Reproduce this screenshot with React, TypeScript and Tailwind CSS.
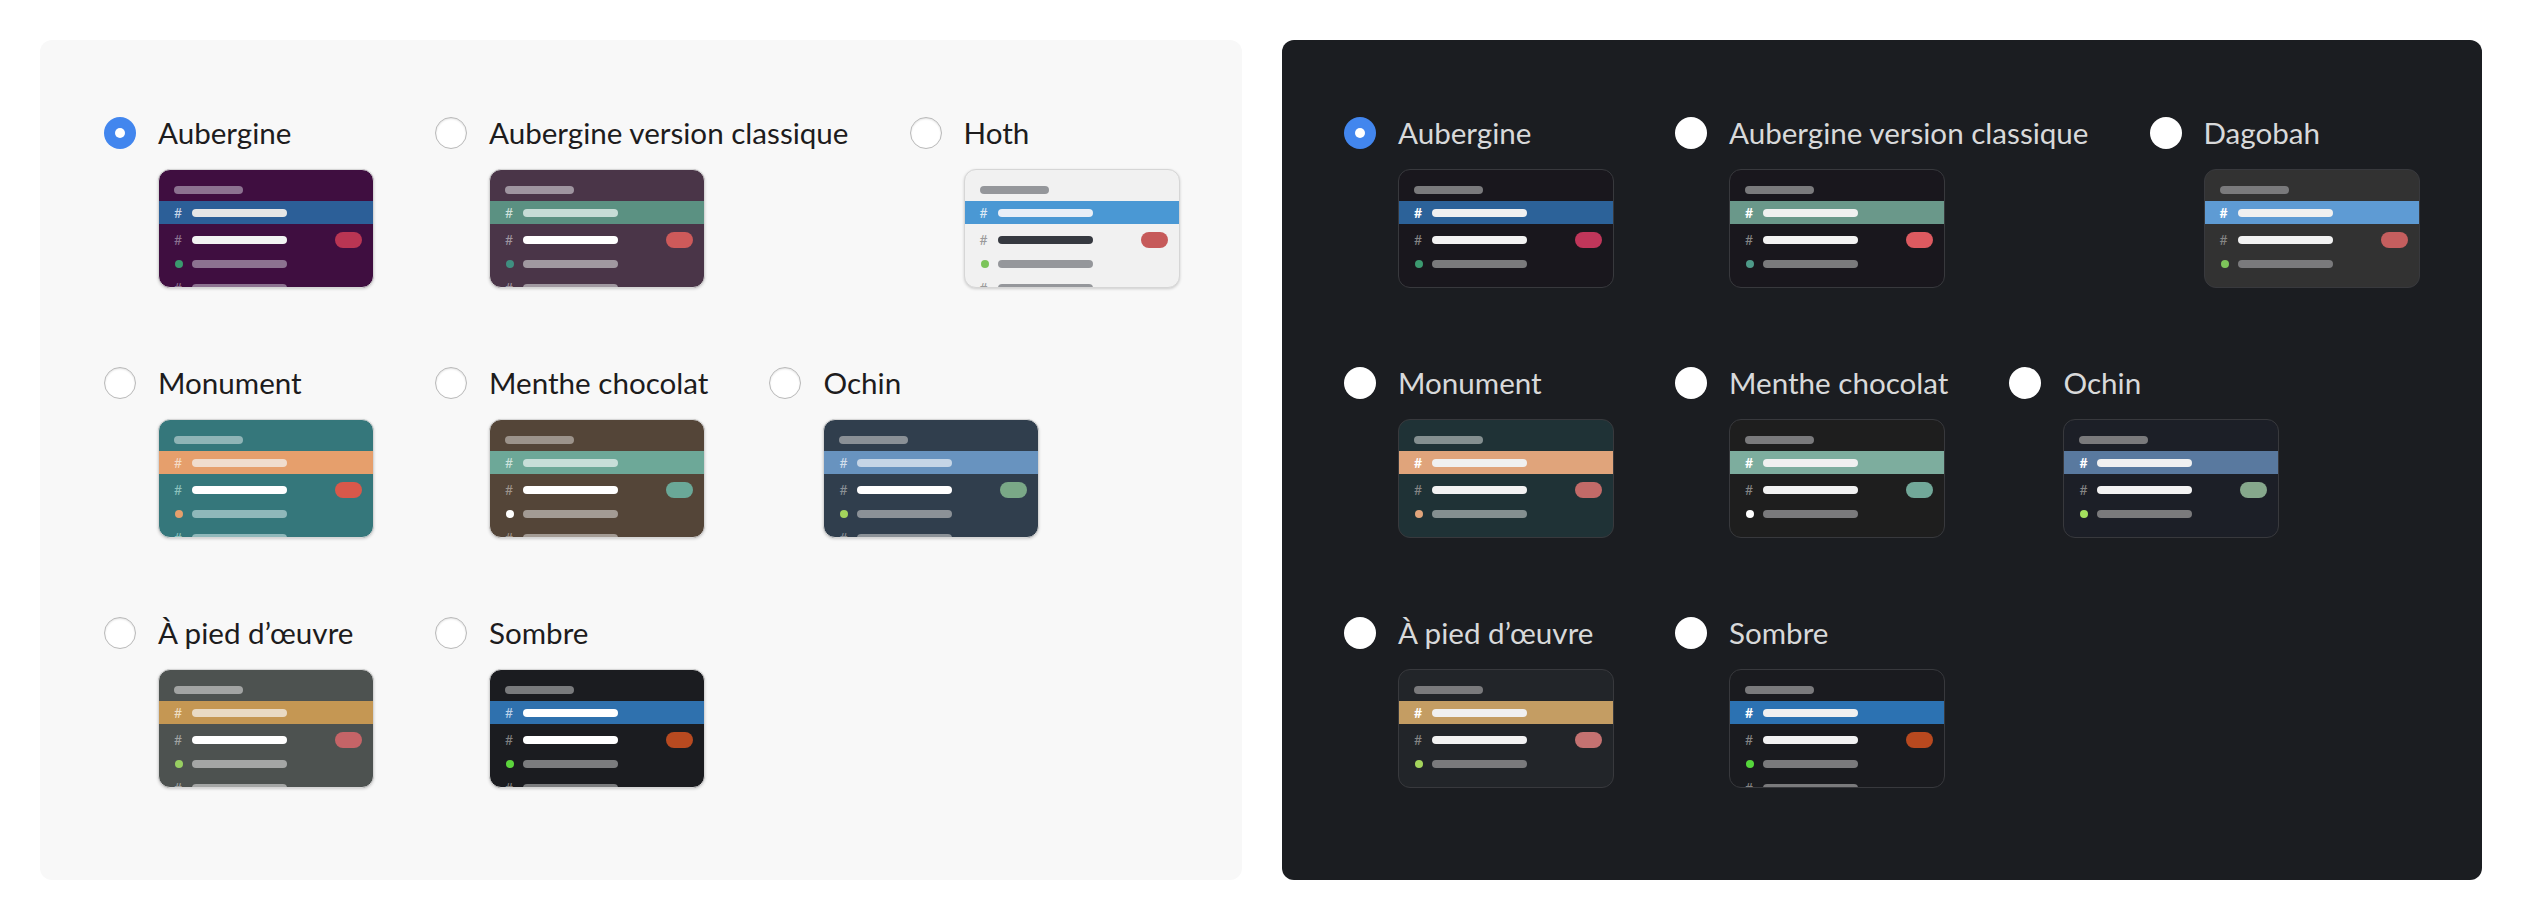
type Theme = {
  name: string;
  bg: string;
  header: string;
  active: string;
  activeHash: string;
  activePill: string;
  hash: string;
  pill: string;
  muted: string;
  dot: string;
  badge: string;
  lastRow?: boolean;
};

const lightThemes: Theme[] = [
  { name: "Aubergine", bg: "#3f0e40", header: "#8c7290", active: "#2c5f98", activeHash: "#c8d6e8", activePill: "#e6e6e6", hash: "#8c7290", pill: "#f2f2f2", muted: "#8c7290", dot: "#3a9a6e", badge: "#b93553", lastRow: true },
  { name: "Aubergine version classique", bg: "#4a3548", header: "#9f95a0", active: "#5b9182", activeHash: "#d0e2dc", activePill: "#c6dcd6", hash: "#9f95a0", pill: "#ffffff", muted: "#a098a0", dot: "#3f8f80", badge: "#cd5a5a", lastRow: true },
  { name: "Hoth", bg: "#f1f1f1", header: "#95979b", active: "#4a98d4", activeHash: "#dce9f5", activePill: "#e8eff7", hash: "#9a9a9a", pill: "#363940", muted: "#95979b", dot: "#7cc45a", badge: "#c65a5a", lastRow: true },
  { name: "Monument", bg: "#35777b", header: "#8fb4b6", active: "#e69f6c", activeHash: "#f5dcc8", activePill: "#f0dccd", hash: "#8cc2bd", pill: "#ffffff", muted: "#8fb8ba", dot: "#e69f6c", badge: "#d9584a", lastRow: true },
  { name: "Menthe chocolat", bg: "#544538", header: "#9c938b", active: "#6da898", activeHash: "#cde3dd", activePill: "#c7ded8", hash: "#9e948c", pill: "#ffffff", muted: "#a39b94", dot: "#ffffff", badge: "#6aa898", lastRow: true },
  { name: "Ochin", bg: "#303e4d", header: "#8a9096", active: "#6893bf", activeHash: "#d3dfec", activePill: "#c5d5e6", hash: "#8a9096", pill: "#ffffff", muted: "#8b9197", dot: "#a3d45c", badge: "#7aa887", lastRow: true },
  { name: "À pied d’œuvre", bg: "#4d5250", header: "#a2a4a3", active: "#c59753", activeHash: "#efdfc5", activePill: "#e9dac4", hash: "#a0a3a2", pill: "#ffffff", muted: "#a4a6a5", dot: "#98cf62", badge: "#c56467", lastRow: true },
  { name: "Sombre", bg: "#1b1c20", header: "#797a7c", active: "#2f71ae", activeHash: "#bcd2ea", activePill: "#ffffff", hash: "#808080", pill: "#ffffff", muted: "#7b7c7e", dot: "#5cd43c", badge: "#b84a20", lastRow: true },
];

const darkBase = { header: "#7a7a7c", activeHash: "#ffffff", activePill: "#f0f0f0", hash: "#858585", pill: "#f2f2f2", muted: "#7a7a7c" };

const darkThemes: Theme[] = [
  { ...darkBase, name: "Aubergine", bg: "#19171d", active: "#2c6299", dot: "#3c9a70", badge: "#c0365a" },
  { ...darkBase, name: "Aubergine version classique", bg: "#19171d", active: "#6a988a", dot: "#4e9a89", badge: "#dd5a60" },
  { ...darkBase, name: "Dagobah", bg: "#323232", active: "#5e9bd4", dot: "#7dc55a", badge: "#c45e5e" },
  { ...darkBase, name: "Monument", bg: "#1f3236", header: "#848f90", muted: "#848f90", active: "#e0a47b", dot: "#e0a47b", badge: "#c26a68" },
  { ...darkBase, name: "Menthe chocolat", bg: "#1e1e1e", active: "#7dad9e", dot: "#ffffff", badge: "#72a899" },
  { ...darkBase, name: "Ochin", bg: "#1c1f27", active: "#59799f", dot: "#a3e05e", badge: "#86a88c" },
  { ...darkBase, name: "À pied d’œuvre", bg: "#222529", active: "#c49d63", dot: "#a4d45c", badge: "#c47271" },
  { ...darkBase, name: "Sombre", bg: "#1a1b1f", active: "#2c72b2", dot: "#55d63b", badge: "#b8491f", lastRow: true },
];

function Preview({ theme, dark }: { theme: Theme; dark: boolean }) {
  return (
    <div
      className={
        dark
          ? "flex h-[119px] w-[216px] flex-col overflow-hidden rounded-xl border border-[#38393d]"
          : "flex h-[119px] w-[216px] flex-col overflow-hidden rounded-xl border border-[#d6d6d6] shadow-[0_1px_3px_rgba(0,0,0,0.18)]"
      }
      style={{ backgroundColor: theme.bg }}
    >
      <div className="h-[31px] shrink-0 pl-[15px] pt-[16px]">
        <div className="h-2 w-[69px] rounded-full" style={{ backgroundColor: theme.header }} />
      </div>
      <div className="flex h-[23px] shrink-0 items-center pl-[15px]" style={{ backgroundColor: theme.active }}>
        <span className={dark ? "w-[18px] text-[14px] font-bold leading-none" : "w-[18px] text-[14px] leading-none"} style={{ color: theme.activeHash }}>#</span>
        <div className="h-2 w-[95px] rounded-full" style={{ backgroundColor: theme.activePill }} />
      </div>
      <div className="flex flex-col pt-1">
        <div className="flex h-6 shrink-0 items-center pl-[15px] pr-[11px]">
          <span className="w-[18px] text-[14px] leading-none" style={{ color: theme.hash }}>#</span>
          <div className="h-2 w-[95px] rounded-full" style={{ backgroundColor: theme.pill }} />
          <div className="ml-auto h-4 w-[27px] rounded-full" style={{ backgroundColor: theme.badge }} />
        </div>
        <div className="flex h-6 shrink-0 items-center pl-[16px]">
          <span className="mr-[9px] h-2 w-2 rounded-full" style={{ backgroundColor: theme.dot }} />
          <div className="h-2 w-[95px] rounded-full" style={{ backgroundColor: theme.muted }} />
        </div>
        {theme.lastRow && (
          <div className="flex h-6 shrink-0 items-center pl-[15px]">
            <span className="w-[18px] text-[14px] leading-none" style={{ color: theme.hash }}>#</span>
            <div className="h-2 w-[95px] rounded-full" style={{ backgroundColor: theme.muted }} />
          </div>
        )}
      </div>
    </div>
  );
}

function Radio({ selected, dark }: { selected: boolean; dark: boolean }) {
  if (selected) {
    return (
      <span className="grid h-8 w-8 shrink-0 place-items-center rounded-full bg-[#4286ee]">
        <span className="h-[10px] w-[10px] rounded-full bg-white" />
      </span>
    );
  }
  return (
    <span
      className={
        dark
          ? "h-8 w-8 shrink-0 rounded-full bg-white"
          : "h-8 w-8 shrink-0 rounded-full border border-[#b9b9b9] bg-white shadow-[inset_0_1px_2px_rgba(0,0,0,0.12)]"
      }
    />
  );
}

function Panel({ themes, dark }: { themes: Theme[]; dark: boolean }) {
  return (
    <section
      className={
        dark
          ? "h-[840px] flex-1 rounded-xl bg-[#1b1d21] pl-[62px] pr-10 pt-[73px]"
          : "h-[840px] flex-1 rounded-xl bg-[#f8f8f8] pl-16 pr-10 pt-[73px]"
      }
    >
      <div className="flex flex-wrap gap-x-[61px] gap-y-[75px]">
        {themes.map((theme, index) => (
          <label key={theme.name} className="flex cursor-pointer items-start gap-[22px]">
            <span className="flex h-10 items-center">
              <Radio selected={index === 0} dark={dark} />
            </span>
            <span className="flex flex-col gap-4">
              <span className={dark ? "h-10 text-[29.6px] leading-10 text-[#d8d9da]" : "h-10 text-[29.6px] leading-10 text-[#1d1c1d]"}>
                {theme.name}
              </span>
              <Preview theme={theme} dark={dark} />
            </span>
          </label>
        ))}
      </div>
    </section>
  );
}

export default function App() {
  return (
    <div className="flex min-h-[920px] gap-10 bg-white p-10 font-['Lato','Liberation_Sans',sans-serif]">
      <Panel themes={lightThemes} dark={false} />
      <Panel themes={darkThemes} dark={true} />
    </div>
  );
}
